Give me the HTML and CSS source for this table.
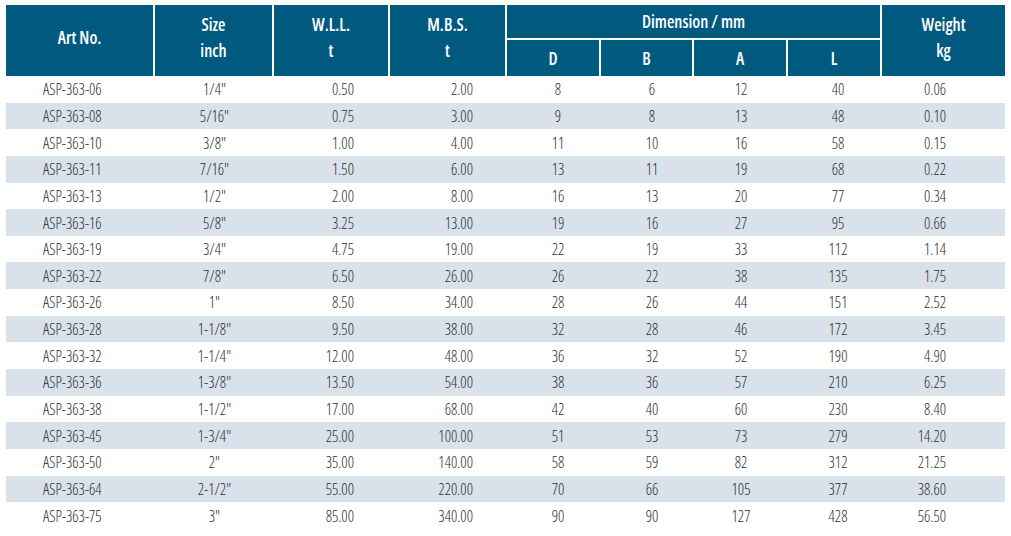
FILE: index.html
```html
<!DOCTYPE html>
<html lang="en">
<head>
<meta charset="utf-8">
<title>ASP-363 Specification</title>
<link rel="stylesheet" href="styles.css">
</head>
<body>
<table class="spec">
  <colgroup>
    <col class="c-art"><col class="c-size"><col class="c-wll"><col class="c-mbs">
    <col class="c-d"><col class="c-b"><col class="c-a"><col class="c-l"><col class="c-kg">
  </colgroup>
  <thead>
    <tr class="h1">
      <th rowspan="2" class="span">Art No.</th>
      <th rowspan="2" class="span">Size<br>inch</th>
      <th rowspan="2" class="span">W.L.L.<br>t</th>
      <th rowspan="2" class="span">M.B.S.<br>t</th>
      <th colspan="4" class="group">Dimension / mm</th>
      <th rowspan="2" class="span last">Weight<br>kg</th>
    </tr>
    <tr class="h2">
      <th>D</th><th>B</th><th>A</th><th>L</th>
    </tr>
  </thead>
  <tbody>
    <tr><td class="art">ASP-363-06</td><td class="size">1/4"</td><td class="wll">0.50</td><td class="mbs">2.00</td><td class="d">8</td><td class="b">6</td><td class="a">12</td><td class="l">40</td><td class="kg">0.06</td></tr>
    <tr><td class="art">ASP-363-08</td><td class="size">5/16"</td><td class="wll">0.75</td><td class="mbs">3.00</td><td class="d">9</td><td class="b">8</td><td class="a">13</td><td class="l">48</td><td class="kg">0.10</td></tr>
    <tr><td class="art">ASP-363-10</td><td class="size">3/8"</td><td class="wll">1.00</td><td class="mbs">4.00</td><td class="d">11</td><td class="b">10</td><td class="a">16</td><td class="l">58</td><td class="kg">0.15</td></tr>
    <tr><td class="art">ASP-363-11</td><td class="size">7/16"</td><td class="wll">1.50</td><td class="mbs">6.00</td><td class="d">13</td><td class="b">11</td><td class="a">19</td><td class="l">68</td><td class="kg">0.22</td></tr>
    <tr><td class="art">ASP-363-13</td><td class="size">1/2"</td><td class="wll">2.00</td><td class="mbs">8.00</td><td class="d">16</td><td class="b">13</td><td class="a">20</td><td class="l">77</td><td class="kg">0.34</td></tr>
    <tr><td class="art">ASP-363-16</td><td class="size">5/8"</td><td class="wll">3.25</td><td class="mbs">13.00</td><td class="d">19</td><td class="b">16</td><td class="a">27</td><td class="l">95</td><td class="kg">0.66</td></tr>
    <tr><td class="art">ASP-363-19</td><td class="size">3/4"</td><td class="wll">4.75</td><td class="mbs">19.00</td><td class="d">22</td><td class="b">19</td><td class="a">33</td><td class="l">112</td><td class="kg">1.14</td></tr>
    <tr><td class="art">ASP-363-22</td><td class="size">7/8"</td><td class="wll">6.50</td><td class="mbs">26.00</td><td class="d">26</td><td class="b">22</td><td class="a">38</td><td class="l">135</td><td class="kg">1.75</td></tr>
    <tr><td class="art">ASP-363-26</td><td class="size">1"</td><td class="wll">8.50</td><td class="mbs">34.00</td><td class="d">28</td><td class="b">26</td><td class="a">44</td><td class="l">151</td><td class="kg">2.52</td></tr>
    <tr><td class="art">ASP-363-28</td><td class="size">1-1/8"</td><td class="wll">9.50</td><td class="mbs">38.00</td><td class="d">32</td><td class="b">28</td><td class="a">46</td><td class="l">172</td><td class="kg">3.45</td></tr>
    <tr><td class="art">ASP-363-32</td><td class="size">1-1/4"</td><td class="wll">12.00</td><td class="mbs">48.00</td><td class="d">36</td><td class="b">32</td><td class="a">52</td><td class="l">190</td><td class="kg">4.90</td></tr>
    <tr><td class="art">ASP-363-36</td><td class="size">1-3/8"</td><td class="wll">13.50</td><td class="mbs">54.00</td><td class="d">38</td><td class="b">36</td><td class="a">57</td><td class="l">210</td><td class="kg">6.25</td></tr>
    <tr><td class="art">ASP-363-38</td><td class="size">1-1/2"</td><td class="wll">17.00</td><td class="mbs">68.00</td><td class="d">42</td><td class="b">40</td><td class="a">60</td><td class="l">230</td><td class="kg">8.40</td></tr>
    <tr><td class="art">ASP-363-45</td><td class="size">1-3/4"</td><td class="wll">25.00</td><td class="mbs">100.00</td><td class="d">51</td><td class="b">53</td><td class="a">73</td><td class="l">279</td><td class="kg">14.20</td></tr>
    <tr><td class="art">ASP-363-50</td><td class="size">2"</td><td class="wll">35.00</td><td class="mbs">140.00</td><td class="d">58</td><td class="b">59</td><td class="a">82</td><td class="l">312</td><td class="kg">21.25</td></tr>
    <tr><td class="art">ASP-363-64</td><td class="size">2-1/2"</td><td class="wll">55.00</td><td class="mbs">220.00</td><td class="d">70</td><td class="b">66</td><td class="a">105</td><td class="l">377</td><td class="kg">38.60</td></tr>
    <tr><td class="art">ASP-363-75</td><td class="size">3"</td><td class="wll">85.00</td><td class="mbs">340.00</td><td class="d">90</td><td class="b">90</td><td class="a">127</td><td class="l">428</td><td class="kg">56.50</td></tr>
  </tbody>
</table>
</body>
</html>
```
FILE: styles.css
```css
html, body {
  margin: 0;
  padding: 0;
  background: #ffffff;
}
body {
  padding: 5px 0 0 6px;
  font-family: "Open Sans", "Liberation Sans", sans-serif;
  font-stretch: 75%;
}
.spec {
  width: 999px;
  table-layout: fixed;
  border-collapse: separate;
  border-spacing: 0;
}
.c-art { width: 149px; }
.c-size { width: 119px; }
.c-wll { width: 116px; }
.c-mbs { width: 117px; }
.c-d { width: 94px; }
.c-b { width: 93px; }
.c-a { width: 94px; }
.c-l { width: 94px; }
.c-kg { width: 123px; }

.spec th {
  background: #005a80;
  color: #ffffff;
  font-weight: 600;
  font-size: 17px;
  line-height: 26px;
  padding: 0;
  text-align: center;
  vertical-align: middle;
  border-right: 2px solid #ffffff;
}
.spec th.last { border-right: 0; }
.spec .h1 th { height: 33px; }
.spec th.span { padding-bottom: 5px; }
.spec .h1 th.group {
  border-bottom: 2px solid #ffffff;
}
.spec .h2 th { height: 35px; padding-top: 1px; }

.spec td {
  height: 26.65px;
  padding: 0;
  font-size: 15.5px;
  font-weight: 320;
  color: #2e2e2e;
  line-height: 18px;
  vertical-align: middle;
  text-align: center;
  white-space: nowrap;
}
.spec tbody tr:nth-child(even) td { background: #d9e2eb; }

.spec td.art { text-align: left; padding-left: 37px; }
.spec td.size { text-align: center; }
.spec td.wll { text-align: right; padding-right: 36px; }
.spec td.mbs { text-align: right; padding-right: 34px; }
.spec td.d { padding-left: 8px; }
.spec td.b { padding-left: 9px; }
.spec td.a { padding-left: 0; }
.spec td.l { padding-left: 6px; }
.spec td.kg { text-align: right; padding-right: 59px; }
```
